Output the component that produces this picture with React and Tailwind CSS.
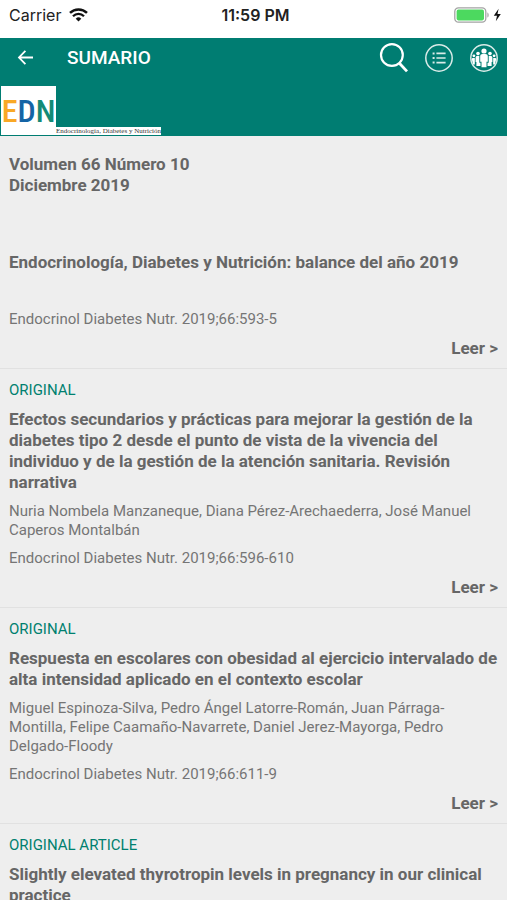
const ARTICLES = [
  {
    id: 'balance-2019',
    title: 'Endocrinología, Diabetes y Nutrición: balance del año 2019',
    citation: 'Endocrinol Diabetes Nutr. 2019;66:593-5',
  },
  {
    id: 'efectos-secundarios',
    section: 'ORIGINAL',
    title:
      'Efectos secundarios y prácticas para mejorar la gestión de la diabetes tipo 2 desde el punto de vista de la vivencia del individuo y de la gestión de la atención sanitaria. Revisión narrativa',
    authors: 'Nuria Nombela Manzaneque, Diana Pérez-Arechaederra, José Manuel Caperos Montalbán',
    citation: 'Endocrinol Diabetes Nutr. 2019;66:596-610',
  },
  {
    id: 'respuesta-escolares',
    section: 'ORIGINAL',
    title:
      'Respuesta en escolares con obesidad al ejercicio intervalado de alta intensidad aplicado en el contexto escolar',
    authors:
      'Miguel Espinoza-Silva, Pedro Ángel Latorre-Román, Juan Párraga-Montilla, Felipe Caamaño-Navarrete, Daniel Jerez-Mayorga, Pedro Delgado-Floody',
    citation: 'Endocrinol Diabetes Nutr. 2019;66:611-9',
  },
  {
    id: 'thyrotropin',
    section: 'ORIGINAL ARTICLE',
    title: 'Slightly elevated thyrotropin levels in pregnancy in our clinical practice',
  },
]

function WifiIcon() {
  return (
    <svg className="h-[14px] w-[19px]" viewBox="0 0 19 14" fill="none" stroke="#111" aria-hidden="true">
      <path d="M1 4.9a12.2 12.2 0 0 1 17 0" strokeWidth="2.5" />
      <path d="M4 8.2a7.8 7.8 0 0 1 11 0" strokeWidth="2.3" />
      <path d="M9.5 13.6 6.7 10.7a4 4 0 0 1 5.6 0z" fill="#111" stroke="none" />
    </svg>
  )
}

function BatteryIcon() {
  return (
    <svg className="h-4 w-[48px]" viewBox="0 0 48 16" aria-hidden="true">
      <rect x="0.8" y="0.8" width="31" height="14.4" rx="3.6" fill="#fff" stroke="#a3a3a3" strokeWidth="1.3" />
      <rect x="2.6" y="2.6" width="27.4" height="10.8" rx="1.8" fill="#4cd95f" />
      <path d="M33.4 5.4c1.7.5 1.7 4.7 0 5.2z" fill="#a3a3a3" />
      <path d="M44.6 1.8 39.8 8.8h3.2l-1.2 5.4 5-7.2h-3.3z" fill="#111" />
    </svg>
  )
}

function BackIcon() {
  return (
    <svg className="h-[18px] w-[18px]" viewBox="0 0 18 18" fill="none" stroke="#fff" strokeWidth="1.8" aria-hidden="true">
      <path d="M16 8.5H2.4M8.4 1.8 2 8.5l6.4 6.7" />
    </svg>
  )
}

function SearchIcon() {
  return (
    <svg className="h-[30px] w-[30px]" viewBox="0 0 30 30" fill="none" stroke="#fff" aria-hidden="true">
      <circle cx="12.9" cy="12" r="10.9" strokeWidth="2.2" />
      <path d="m20.4 20.2 7.6 8.2" strokeWidth="2.8" />
    </svg>
  )
}

function ListIcon() {
  return (
    <svg className="h-[30px] w-[30px]" viewBox="0 0 30 30" fill="none" stroke="#d9ebe8" aria-hidden="true">
      <circle cx="15" cy="15" r="13.2" strokeWidth="1.5" />
      <path d="M12.4 10.4h9.2M12.4 15h9.2M12.4 19.6h9.2" strokeWidth="1.6" />
      <path d="M8.6 10.4h2M8.6 15h2M8.6 19.6h2" strokeWidth="2" />
    </svg>
  )
}

function PeopleIcon() {
  return (
    <svg className="h-[30px] w-[30px]" viewBox="0 0 30 30" fill="#fff" aria-hidden="true">
      <circle cx="15" cy="15" r="13.2" fill="none" stroke="#d9ebe8" strokeWidth="1.5" />
      <circle cx="15" cy="8" r="2.6" />
      <path d="M11.2 13.2c0-1.5 1-2.2 2.4-2.2h2.8c1.4 0 2.4.7 2.4 2.2v5.6h-1.3v5.4h-5v-5.4h-1.3z" />
      <circle cx="9" cy="10.6" r="1.8" />
      <circle cx="21" cy="10.6" r="1.8" />
      <path d="M6.6 14.8c0-1.2.7-1.8 1.8-1.8h1.9v6.7h1.2v3.4H7.4v-4H6.6z" />
      <path d="M23.4 14.8c0-1.2-.7-1.8-1.8-1.8h-1.9v6.7h-1.2v3.4h4.1v-4h.8z" />
      <circle cx="4.9" cy="12.8" r="1.4" />
      <circle cx="25.1" cy="12.8" r="1.4" />
      <path d="M2.8 16.3c0-.9.5-1.4 1.4-1.4h1.6v6.7H4.2z" />
      <path d="M27.2 16.3c0-.9-.5-1.4-1.4-1.4h-1.6v6.7h1.6z" />
    </svg>
  )
}

function StatusBar() {
  return (
    <div className="grid h-[38px] grid-cols-3 items-start bg-white pt-[5px] pr-[5px] pl-[9px] font-['Inter',sans-serif] text-[16px] leading-5 text-[#222]">
      <div className="flex items-center gap-2">
        <span>Carrier</span>
        <WifiIcon />
      </div>
      <span className="text-center font-semibold">11:59 PM</span>
      <div className="flex h-5 items-center justify-end">
        <BatteryIcon />
      </div>
    </div>
  )
}

function Logo() {
  return (
    <div className="flex items-end pl-px">
      <div className="flex h-[49px] w-[55px] items-center justify-center bg-white font-['Roboto_Condensed','Roboto',sans-serif] text-[32px] leading-none font-medium">
        <span className="text-[#f9a825]">E</span>
        <span className="text-[#1464a5]">D</span>
        <span className="text-[#138a76]">N</span>
      </div>
      <span className="bg-white font-['Liberation_Serif',serif] text-[7px] leading-2 text-[#333]">
        Endocrinología, Diabetes y Nutrición
      </span>
    </div>
  )
}

function Header() {
  return (
    <header className="bg-[#007d72]">
      <div className="flex h-10 items-center pr-2 pl-[17px]">
        <button type="button" aria-label="Volver">
          <BackIcon />
        </button>
        <h1 className="ml-8 flex-1 text-[19px] leading-6 font-medium text-white">SUMARIO</h1>
        <div className="flex items-center gap-[15px]">
          <button type="button" aria-label="Buscar">
            <SearchIcon />
          </button>
          <button type="button" aria-label="Lista">
            <ListIcon />
          </button>
          <button type="button" aria-label="Comunidad">
            <PeopleIcon />
          </button>
        </div>
      </div>
      <div className="pt-2 pb-px">
        <Logo />
      </div>
    </header>
  )
}

function Article({ section, title, authors, citation }) {
  return (
    <article className="flex flex-col gap-[9px] border-b border-[#e1e1e1] px-[9px] pt-3 pb-[9px]">
      {/* empty rows keep their height when the section or authors are missing */}
      <p className="min-h-[19px] text-[15px] leading-[19px] text-[#00806f]">{section}</p>
      <h2 className="text-[17px] leading-[21px] font-bold">{title}</h2>
      <p className="min-h-[19px] text-[15px] leading-[19px] text-[#757575]">{authors}</p>
      {citation && <p className="text-[15px] leading-[19px] text-[#757575]">{citation}</p>}
      <a href="#leer" className="self-end text-[17px] leading-[21px] font-bold">
        Leer &gt;
      </a>
    </article>
  )
}

export default function App() {
  return (
    <div className="h-screen overflow-hidden bg-[#eeeeee] font-['Roboto',sans-serif] text-[#666666]">
      <StatusBar />
      <Header />
      <main>
        <div className="px-[9px] pt-[18px] pb-4 text-[17px] leading-[21px] font-bold">
          <p>Volumen 66 Número 10</p>
          <p>Diciembre 2019</p>
        </div>
        {ARTICLES.map(article => (
          <Article key={article.id} {...article} />
        ))}
      </main>
    </div>
  )
}
